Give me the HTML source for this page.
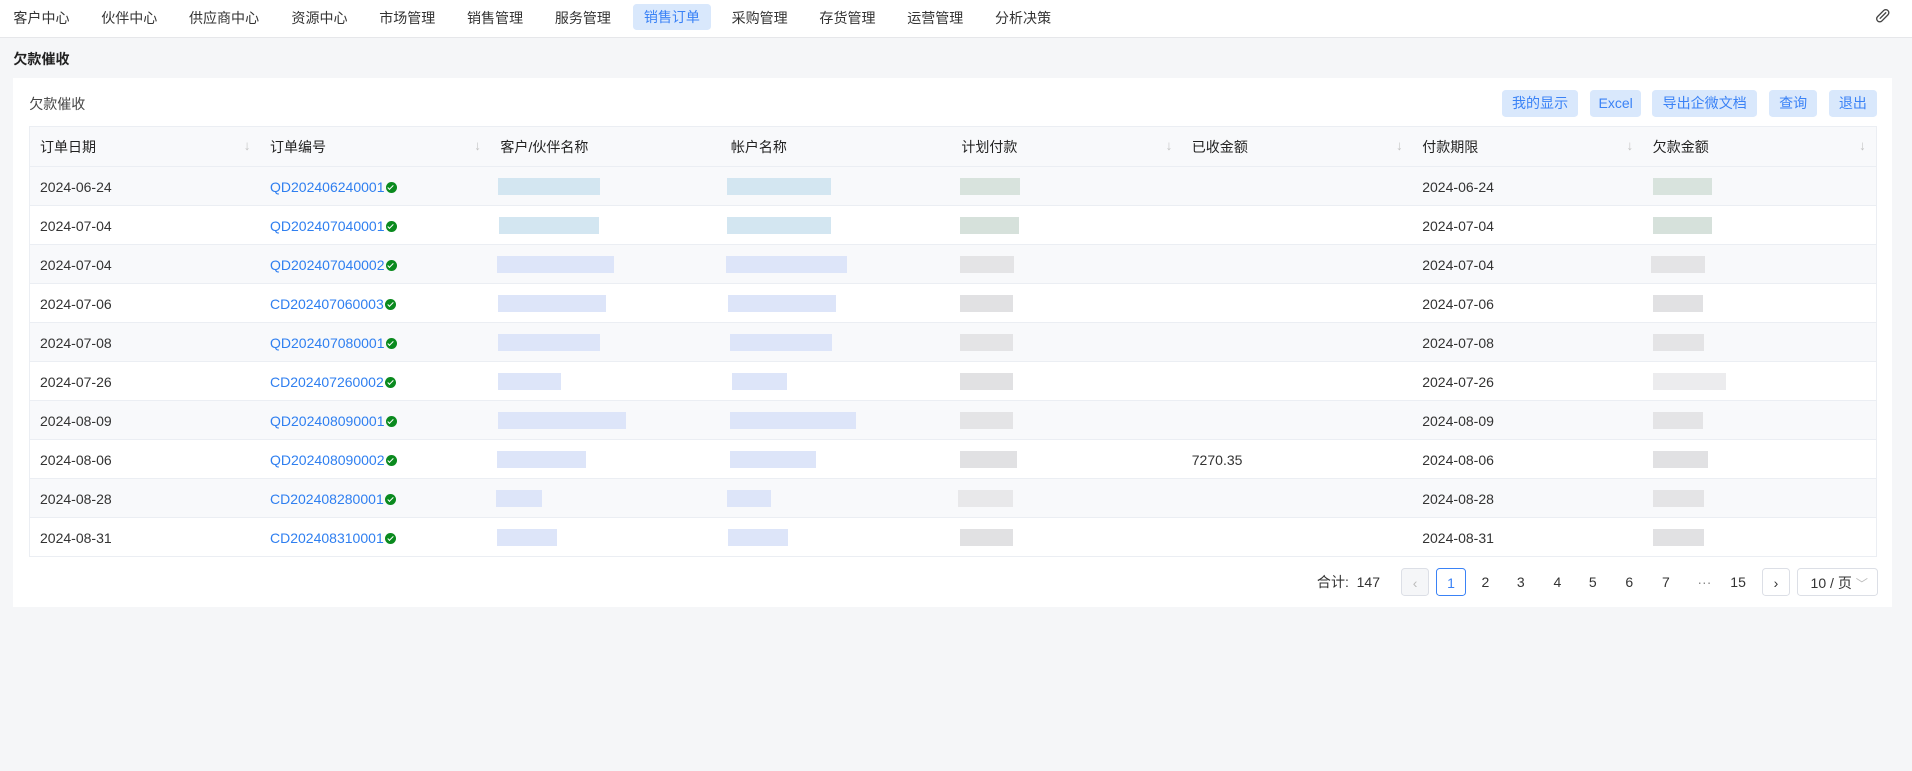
<!DOCTYPE html>
<html><head><meta charset="utf-8"><style>
html,body{margin:0;padding:0}
body{width:1568px;height:632px;zoom:1.219388;background:#f5f6f8;font-family:"Liberation Sans","Noto Sans CJK SC",sans-serif;color:#333;font-size:12px;position:relative;overflow:hidden}
.nav{position:absolute;left:0;top:0;width:1568px;height:30px;background:#fff;border-bottom:1px solid #e6e7ea}
.nav span{position:absolute;top:7px;font-size:11.5px;color:#333;line-height:16px}
.nav .act{background:#d9e8fc;color:#3a82f6;padding:0 9px;top:3px;line-height:22px;border-radius:3px}
.title{position:absolute;left:11px;top:40px;font-weight:bold;font-size:11.5px;color:#222}
.card{position:absolute;left:11px;top:64px;width:1541px;height:434px;background:#fff}
.ch{position:absolute;left:13px;top:13px;font-size:11.5px;color:#444}
.btn{position:absolute;top:10px;height:22px;line-height:22px;background:#d9e8fc;color:#3a82f6;border-radius:3px;text-align:center;font-size:11.5px}
table{position:absolute;left:13px;top:39px;border-collapse:collapse;border:1px solid #ebeef3;table-layout:fixed;width:1515px}
td,th{height:31px;padding:2px 0 0 8px;text-align:left;border-bottom:1px solid #ebeef3;font-size:11.5px;white-space:nowrap;position:relative;box-sizing:border-box}
td{height:32px}
th{height:33px;font-weight:normal;color:#222;background:#f8f9fb}
th i{position:absolute;right:8px;top:9px;color:#c4c4c4;font-style:normal;font-size:11px}
tr:nth-child(even) td{background:#f8f9fb}
a{color:#2f7ff0;text-decoration:none}
.ok{display:inline-block;width:9px;height:9px;border-radius:50%;background:#0a8a1e;vertical-align:-1px;margin-left:1px;position:relative}
.ok:after{content:"";position:absolute;left:3px;top:1.5px;width:2px;height:4px;border:solid #fff;border-width:0 1.3px 1.3px 0;transform:rotate(45deg)}
.b{position:absolute;top:9px;height:14px}
.pg{position:absolute;top:402px;height:23px;line-height:23px;font-size:11.5px;color:#333}
.pb{border:1px solid #dcdfe6;border-radius:3px;text-align:center;box-sizing:border-box}
</style></head><body>
<div class="nav">
<span style="left:11px">客户中心</span><span style="left:83px">伙伴中心</span><span style="left:155px">供应商中心</span><span style="left:239px">资源中心</span><span style="left:311px">市场管理</span><span style="left:383px">销售管理</span><span style="left:455px">服务管理</span><span class="act" style="left:519px">销售订单</span><span style="left:600px">采购管理</span><span style="left:672px">存货管理</span><span style="left:744px">运营管理</span><span style="left:816px">分析决策</span>
<svg style="position:absolute;left:1536px;top:5px" width="16" height="16" viewBox="0 0 16 16"><g transform="rotate(-45 8 8)"><rect x="2" y="5.5" width="12" height="5" rx="2.5" fill="none" stroke="#444" stroke-width="1.1"/><path d="M5 8h6.5" stroke="#444" stroke-width="1.1" stroke-linecap="round"/></g></svg>
</div>
<div class="title">欠款催收</div>
<div class="card">
<div class="ch">欠款催收</div>
<div class="btn" style="left:1221px;width:62px">我的显示</div>
<div class="btn" style="left:1293px;width:42px">Excel</div>
<div class="btn" style="left:1344px;width:86px">导出企微文档</div>
<div class="btn" style="left:1440px;width:39px">查询</div>
<div class="btn" style="left:1489px;width:39px">退出</div>
<table>
<colgroup><col style="width:189px"><col style="width:189px"><col style="width:189px"><col style="width:189px"><col style="width:189px"><col style="width:189px"><col style="width:189px"><col></colgroup>
<tr><th>订单日期<i>↓</i></th><th>订单编号<i>↓</i></th><th>客户/伙伴名称</th><th>帐户名称</th><th>计划付款<i>↓</i></th><th>已收金额<i>↓</i></th><th>付款期限<i>↓</i></th><th>欠款金额<i>↓</i></th></tr>
<tr><td>2024-06-24</td><td><a>QD202406240001</a><span class="ok"></span></td><td><div class="b" style="left:6px;width:84px;background:#d3e6f1"></div></td><td><div class="b" style="left:5px;width:85px;background:#d3e6f1"></div></td><td><div class="b" style="left:7px;width:49px;background:#d8e3dd"></div></td><td></td><td>2024-06-24</td><td><div class="b" style="left:8px;width:49px;background:#d8e3dd"></div></td></tr>
<tr><td>2024-07-04</td><td><a>QD202407040001</a><span class="ok"></span></td><td><div class="b" style="left:7px;width:82px;background:#d3e6f1"></div></td><td><div class="b" style="left:5px;width:85px;background:#d3e6f1"></div></td><td><div class="b" style="left:7px;width:48px;background:#d6e1db"></div></td><td></td><td>2024-07-04</td><td><div class="b" style="left:8px;width:49px;background:#d6e1db"></div></td></tr>
<tr><td>2024-07-04</td><td><a>QD202407040002</a><span class="ok"></span></td><td><div class="b" style="left:5px;width:96px;background:#dde5f9"></div></td><td><div class="b" style="left:4px;width:99px;background:#dde5f9"></div></td><td><div class="b" style="left:7px;width:44px;background:#e4e4e6"></div></td><td></td><td>2024-07-04</td><td><div class="b" style="left:7px;width:44px;background:#e4e4e6"></div></td></tr>
<tr><td>2024-07-06</td><td><a>CD202407060003</a><span class="ok"></span></td><td><div class="b" style="left:6px;width:89px;background:#dde5f9"></div></td><td><div class="b" style="left:6px;width:88px;background:#dde5f9"></div></td><td><div class="b" style="left:7px;width:43px;background:#e1e1e3"></div></td><td></td><td>2024-07-06</td><td><div class="b" style="left:8px;width:41px;background:#e1e1e3"></div></td></tr>
<tr><td>2024-07-08</td><td><a>QD202407080001</a><span class="ok"></span></td><td><div class="b" style="left:6px;width:84px;background:#dde5f9"></div></td><td><div class="b" style="left:7px;width:84px;background:#dde5f9"></div></td><td><div class="b" style="left:7px;width:43px;background:#e4e4e6"></div></td><td></td><td>2024-07-08</td><td><div class="b" style="left:8px;width:42px;background:#e4e4e6"></div></td></tr>
<tr><td>2024-07-26</td><td><a>CD202407260002</a><span class="ok"></span></td><td><div class="b" style="left:6px;width:52px;background:#dde5f9"></div></td><td><div class="b" style="left:9px;width:45px;background:#dde5f9"></div></td><td><div class="b" style="left:7px;width:43px;background:#e1e1e3"></div></td><td></td><td>2024-07-26</td><td><div class="b" style="left:8px;width:60px;background:#ececee"></div></td></tr>
<tr><td>2024-08-09</td><td><a>QD202408090001</a><span class="ok"></span></td><td><div class="b" style="left:6px;width:105px;background:#dde5f9"></div></td><td><div class="b" style="left:7px;width:104px;background:#dde5f9"></div></td><td><div class="b" style="left:7px;width:43px;background:#e4e4e6"></div></td><td></td><td>2024-08-09</td><td><div class="b" style="left:8px;width:41px;background:#e4e4e6"></div></td></tr>
<tr><td>2024-08-06</td><td><a>QD202408090002</a><span class="ok"></span></td><td><div class="b" style="left:5px;width:73px;background:#dde5f9"></div></td><td><div class="b" style="left:7px;width:71px;background:#dde5f9"></div></td><td><div class="b" style="left:7px;width:47px;background:#e1e1e3"></div></td><td>7270.35</td><td>2024-08-06</td><td><div class="b" style="left:8px;width:45px;background:#e1e1e3"></div></td></tr>
<tr><td>2024-08-28</td><td><a>CD202408280001</a><span class="ok"></span></td><td><div class="b" style="left:4px;width:38px;background:#dde5f9"></div></td><td><div class="b" style="left:5px;width:36px;background:#dde5f9"></div></td><td><div class="b" style="left:5px;width:45px;background:#e8e8ea"></div></td><td></td><td>2024-08-28</td><td><div class="b" style="left:8px;width:42px;background:#e4e4e6"></div></td></tr>
<tr><td>2024-08-31</td><td><a>CD202408310001</a><span class="ok"></span></td><td><div class="b" style="left:5px;width:49px;background:#dde5f9"></div></td><td><div class="b" style="left:6px;width:49px;background:#dde5f9"></div></td><td><div class="b" style="left:7px;width:43px;background:#e1e1e3"></div></td><td></td><td>2024-08-31</td><td><div class="b" style="left:8px;width:42px;background:#e1e1e3"></div></td></tr>
</table>
<div class="pg" style="left:1069px">合计:&nbsp;&nbsp;147</div>
<div class="pg pb" style="left:1138px;width:23px;background:#f5f6f8;color:#bbb">‹</div>
<div class="pg pb" style="left:1167px;width:24px;border-color:#3a82f6;color:#3a82f6">1</div>
<div class="pg" style="left:1204px">2</div><div class="pg" style="left:1233px">3</div><div class="pg" style="left:1263px">4</div><div class="pg" style="left:1292px">5</div><div class="pg" style="left:1322px">6</div><div class="pg" style="left:1352px">7</div><div class="pg" style="left:1381px;color:#888">···</div><div class="pg" style="left:1408px">15</div>
<div class="pg pb" style="left:1434px;width:23px">›</div>
<div class="pg pb" style="left:1463px;width:66px;text-align:left;padding-left:10px">10 / 页 <span style="color:#bbb;font-size:10px">﹀</span></div>
</div>
</body></html>
